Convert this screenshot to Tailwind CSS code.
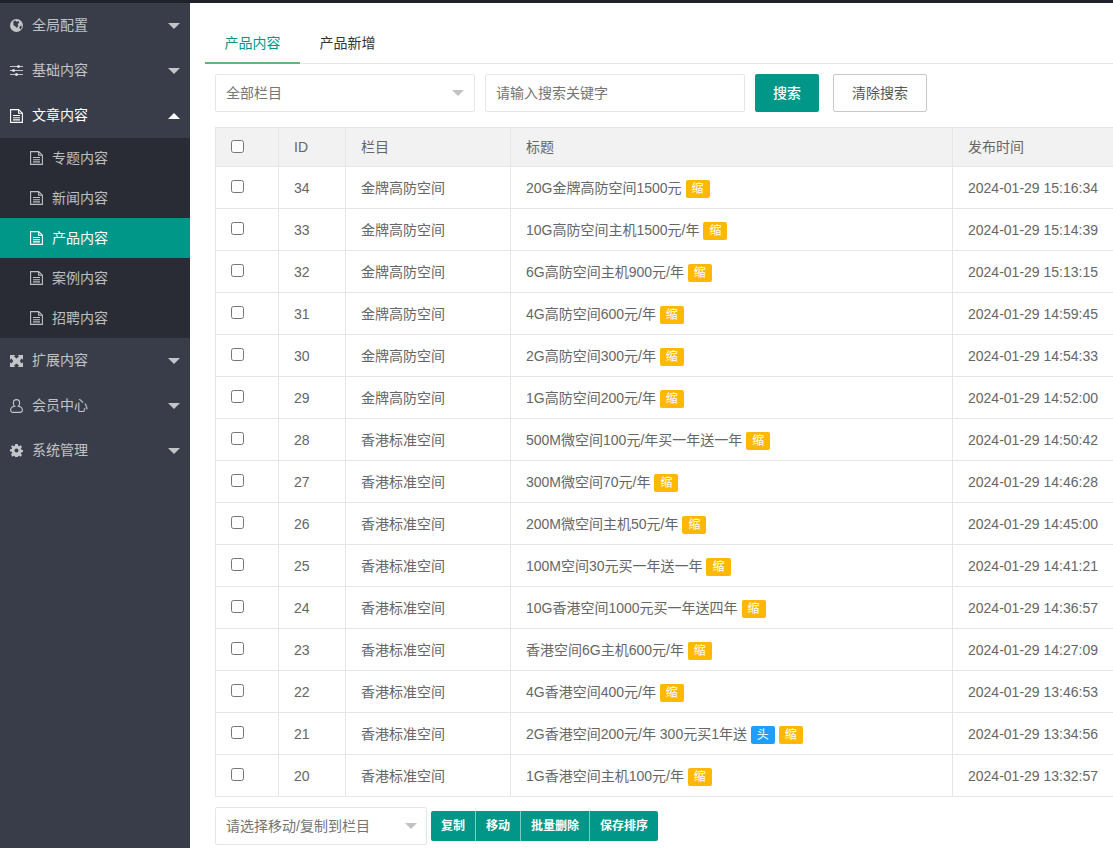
<!DOCTYPE html>
<html lang="zh"><head><meta charset="utf-8"><script src="https://cdn.jsdelivr.net/npm/@tailwindcss/browser@4"></script></head>
<body class="h-[848px] overflow-hidden bg-white font-['Liberation_Sans','Noto_Sans_CJK_SC',sans-serif] text-[14px] text-[#666]">
<svg class="hidden"><defs>
<symbol id="doc" viewBox="0 0 13 14"><path fill="none" stroke="currentColor" stroke-width="1.1" d="M.6.6h8l3.800 3.600v9.200H.6zM8.600.6v3.600h3.800"/><path stroke="currentColor" stroke-width="1.100" d="M3 6.500h7M3 8.700h7M3 10.900h7"/></symbol>
</defs></svg>
<div class="h-[3px] bg-[#20222a]"></div>
<div class="flex h-[845px]">
<aside class="w-[190px] shrink-0 bg-[#393d49] text-[rgba(255,255,255,.7)]">
 <a class="flex h-[45px] items-center pl-[10px] pr-[10px]"><svg class="w-[13px] h-[13px]" viewBox="0 0 13 13"><circle cx="6.500" cy="6.500" r="6.500" fill="currentColor"/><path fill="#393d49" d="M3.200 2.500l2.200-1 1.400 1.200L8.500 2l.7 1.600-1.500 1.600.6 1.600L7 9 5.500 7.500 3.500 6.200zM10 7l1.500-.5.300 1.700-1.300 2.300L9.300 9z"/></svg><span class="ml-[9px] flex-1">全局配置</span><i class="border-x-[6px] border-t-[6px] border-x-transparent border-t-current"></i></a>
 <a class="flex h-[45px] items-center pl-[10px] pr-[10px]"><svg class="w-[13px] h-[13px]" viewBox="0 0 13 13"><path stroke="currentColor" stroke-width="1.100" d="M0 2.500h13M0 6.500h13M0 10.500h13"/><path stroke="currentColor" stroke-width="2.200" d="M8.500 1v3M3.500 5v3M6.500 9v3"/></svg><span class="ml-[9px] flex-1">基础内容</span><i class="border-x-[6px] border-t-[6px] border-x-transparent border-t-current"></i></a>
 <a class="flex h-[45px] items-center pl-[10px] pr-[10px] text-white"><svg class="w-[13px] h-[14px]"><use href="#doc"/></svg><span class="ml-[9px] flex-1">文章内容</span><i class="border-x-[6px] border-b-[6px] border-x-transparent border-b-current"></i></a>
 <div class="bg-[#2a2c35]">
  <a class="flex h-10 items-center pl-[30px]"><svg class="w-[13px] h-[14px]"><use href="#doc"/></svg><span class="ml-[9px]">专题内容</span></a>
  <a class="flex h-10 items-center pl-[30px]"><svg class="w-[13px] h-[14px]"><use href="#doc"/></svg><span class="ml-[9px]">新闻内容</span></a>
  <a class="flex h-10 items-center pl-[30px] bg-[#009688] text-white"><svg class="w-[13px] h-[14px]"><use href="#doc"/></svg><span class="ml-[9px]">产品内容</span></a>
  <a class="flex h-10 items-center pl-[30px]"><svg class="w-[13px] h-[14px]"><use href="#doc"/></svg><span class="ml-[9px]">案例内容</span></a>
  <a class="flex h-10 items-center pl-[30px]"><svg class="w-[13px] h-[14px]"><use href="#doc"/></svg><span class="ml-[9px]">招聘内容</span></a>
 </div>
 <a class="flex h-[45px] items-center pl-[10px] pr-[10px]"><svg class="w-[13px] h-[12px]" viewBox="0 0 13 12"><path fill="currentColor" d="M0 0h5.200L4 1.500 6.500 3.500 9 1.500 7.800 0H13v4.800l-1.500-1.200L9.800 6l1.700 2.400L13 7.200V12H7.800L9 10.500 6.500 8.500 4 10.500 5.200 12H0V7.200l1.500 1.200L3.200 6 1.500 3.600 0 4.800z"/></svg><span class="ml-[9px] flex-1">扩展内容</span><i class="border-x-[6px] border-t-[6px] border-x-transparent border-t-current"></i></a>
 <a class="flex h-[45px] items-center pl-[10px] pr-[10px]"><svg class="w-[13px] h-[14px]" viewBox="0 0 13 14"><path fill="none" stroke="currentColor" stroke-width="1.100" d="M6.500.6c1.900 0 3.100 1.300 3.100 3.100v.9c0 1.200-.5 2.100-1.300 2.700 2.400.5 4.100 1.800 4.100 3.500 0 1.600-1 2.600-2.400 2.600H3c-1.400 0-2.400-1-2.400-2.600 0-1.700 1.700-3 4.100-3.500-.8-.6-1.300-1.500-1.300-2.700v-.9C3.400 1.900 4.600.6 6.500.6z"/></svg><span class="ml-[9px] flex-1">会员中心</span><i class="border-x-[6px] border-t-[6px] border-x-transparent border-t-current"></i></a>
 <a class="flex h-[45px] items-center pl-[10px] pr-[10px]"><svg class="w-[13px] h-[13px]" viewBox="0 0 13 13"><path fill="currentColor" fill-rule="evenodd" d="M5.200 0h2.600l.3 1.800 1.100.5L10.700 1.200l1.300 1.900-1.200 1.400.4 1.100 1.800.3v2.200l-1.800.3-.4 1.100 1.200 1.400-1.300 1.900-1.500-1.100-1.100.5-.3 1.800H5.200l-.3-1.800-1.100-.5-1.500 1.100L1 10.300l1.200-1.400-.4-1.100L0 7.500V5.300l1.800-.3.400-1.100L1 2.500l1.300-1.300 1.500 1.100 1.100-.5zM6.500 4.500a2 2 0 1 0 0 4 2 2 0 0 0 0-4z"/></svg><span class="ml-[9px] flex-1">系统管理</span><i class="border-x-[6px] border-t-[6px] border-x-transparent border-t-current"></i></a>
</aside>
<main class="min-w-0 flex-1 overflow-hidden">
 <div class="mt-[20px] ml-[15px] flex h-[41px] border-b border-[#e6e6e6]">
  <div class="relative flex w-[95px] h-[40px] items-center justify-center text-[#009688] after:absolute after:inset-x-0 after:bottom-[-1px] after:h-[2px] after:bg-[#5fb878] after:content-['']">产品内容</div>
  <div class="flex w-[95px] h-[40px] items-center justify-center text-[#333]">产品新增</div>
 </div>
 <form class="ml-[25px] mt-[10px] flex h-[38px]">
  <div class="flex w-[260px] items-center justify-between rounded-[2px] border border-[#e6e6e6] pl-[10px] pr-[10px] text-[#757575]">全部栏目<i class="border-x-[6px] border-t-[6px] border-x-transparent border-t-[#c2c2c2]"></i></div>
  <div class="ml-[10px] flex w-[260px] items-center rounded-[2px] border border-[#e6e6e6] pl-[10px] text-[#757575]">请输入搜索关键字</div>
  <button type="button" class="ml-[10px] w-[64px] rounded-[2px] bg-[#009688] font-medium text-white">搜索</button>
  <button type="button" class="ml-[14px] w-[94px] rounded-[2px] border border-[#c9c9c9] text-[#555]">清除搜索</button>
 </form>
 <div class="ml-[25px] mt-[15px] w-[1000px]">
 <table class="w-[1000px] table-fixed border-collapse">
  <colgroup><col class="w-[63px]"><col class="w-[67px]"><col class="w-[165px]"><col class="w-[442px]"><col></colgroup>
  <thead><tr class="h-[39px] bg-[#f2f2f2] text-left"><th class="border border-[#e6e6e6] pl-[15px] pb-[3px] font-normal"><input type="checkbox" class="align-middle w-[13px] h-[13px]"></th><th class="border border-[#e6e6e6] pl-[15px] pt-[1px] font-normal">ID</th><th class="border border-[#e6e6e6] pl-[15px] pt-[1px] font-normal">栏目</th><th class="border border-[#e6e6e6] pl-[15px] pt-[1px] font-normal">标题</th><th class="border border-[#e6e6e6] pl-[15px] pt-[1px] font-normal">发布时间</th></tr></thead>
  <tbody>
  <tr class="h-[42px]"><td class="border border-[#e6e6e6] pl-[15px] pb-[3px]"><input type="checkbox" class="align-middle w-[13px] h-[13px]"></td><td class="border border-[#e6e6e6] pl-[15px] pt-[2px]">34</td><td class="border border-[#e6e6e6] pl-[15px] pt-[2px]">金牌高防空间</td><td class="border border-[#e6e6e6] pl-[15px] pt-[2px]">20G金牌高防空间1500元 <span class="inline-block h-[18px] rounded-[2px] bg-[#ffb800] px-[6px] text-[12px] leading-[18px] text-white">缩</span></td><td class="border border-[#e6e6e6] pl-[15px] pt-[2px]">2024-01-29 15:16:34</td></tr>
  <tr class="h-[42px]"><td class="border border-[#e6e6e6] pl-[15px] pb-[3px]"><input type="checkbox" class="align-middle w-[13px] h-[13px]"></td><td class="border border-[#e6e6e6] pl-[15px] pt-[2px]">33</td><td class="border border-[#e6e6e6] pl-[15px] pt-[2px]">金牌高防空间</td><td class="border border-[#e6e6e6] pl-[15px] pt-[2px]">10G高防空间主机1500元/年 <span class="inline-block h-[18px] rounded-[2px] bg-[#ffb800] px-[6px] text-[12px] leading-[18px] text-white">缩</span></td><td class="border border-[#e6e6e6] pl-[15px] pt-[2px]">2024-01-29 15:14:39</td></tr>
  <tr class="h-[42px]"><td class="border border-[#e6e6e6] pl-[15px] pb-[3px]"><input type="checkbox" class="align-middle w-[13px] h-[13px]"></td><td class="border border-[#e6e6e6] pl-[15px] pt-[2px]">32</td><td class="border border-[#e6e6e6] pl-[15px] pt-[2px]">金牌高防空间</td><td class="border border-[#e6e6e6] pl-[15px] pt-[2px]">6G高防空间主机900元/年 <span class="inline-block h-[18px] rounded-[2px] bg-[#ffb800] px-[6px] text-[12px] leading-[18px] text-white">缩</span></td><td class="border border-[#e6e6e6] pl-[15px] pt-[2px]">2024-01-29 15:13:15</td></tr>
  <tr class="h-[42px]"><td class="border border-[#e6e6e6] pl-[15px] pb-[3px]"><input type="checkbox" class="align-middle w-[13px] h-[13px]"></td><td class="border border-[#e6e6e6] pl-[15px] pt-[2px]">31</td><td class="border border-[#e6e6e6] pl-[15px] pt-[2px]">金牌高防空间</td><td class="border border-[#e6e6e6] pl-[15px] pt-[2px]">4G高防空间600元/年 <span class="inline-block h-[18px] rounded-[2px] bg-[#ffb800] px-[6px] text-[12px] leading-[18px] text-white">缩</span></td><td class="border border-[#e6e6e6] pl-[15px] pt-[2px]">2024-01-29 14:59:45</td></tr>
  <tr class="h-[42px]"><td class="border border-[#e6e6e6] pl-[15px] pb-[3px]"><input type="checkbox" class="align-middle w-[13px] h-[13px]"></td><td class="border border-[#e6e6e6] pl-[15px] pt-[2px]">30</td><td class="border border-[#e6e6e6] pl-[15px] pt-[2px]">金牌高防空间</td><td class="border border-[#e6e6e6] pl-[15px] pt-[2px]">2G高防空间300元/年 <span class="inline-block h-[18px] rounded-[2px] bg-[#ffb800] px-[6px] text-[12px] leading-[18px] text-white">缩</span></td><td class="border border-[#e6e6e6] pl-[15px] pt-[2px]">2024-01-29 14:54:33</td></tr>
  <tr class="h-[42px]"><td class="border border-[#e6e6e6] pl-[15px] pb-[3px]"><input type="checkbox" class="align-middle w-[13px] h-[13px]"></td><td class="border border-[#e6e6e6] pl-[15px] pt-[2px]">29</td><td class="border border-[#e6e6e6] pl-[15px] pt-[2px]">金牌高防空间</td><td class="border border-[#e6e6e6] pl-[15px] pt-[2px]">1G高防空间200元/年 <span class="inline-block h-[18px] rounded-[2px] bg-[#ffb800] px-[6px] text-[12px] leading-[18px] text-white">缩</span></td><td class="border border-[#e6e6e6] pl-[15px] pt-[2px]">2024-01-29 14:52:00</td></tr>
  <tr class="h-[42px]"><td class="border border-[#e6e6e6] pl-[15px] pb-[3px]"><input type="checkbox" class="align-middle w-[13px] h-[13px]"></td><td class="border border-[#e6e6e6] pl-[15px] pt-[2px]">28</td><td class="border border-[#e6e6e6] pl-[15px] pt-[2px]">香港标准空间</td><td class="border border-[#e6e6e6] pl-[15px] pt-[2px]">500M微空间100元/年买一年送一年 <span class="inline-block h-[18px] rounded-[2px] bg-[#ffb800] px-[6px] text-[12px] leading-[18px] text-white">缩</span></td><td class="border border-[#e6e6e6] pl-[15px] pt-[2px]">2024-01-29 14:50:42</td></tr>
  <tr class="h-[42px]"><td class="border border-[#e6e6e6] pl-[15px] pb-[3px]"><input type="checkbox" class="align-middle w-[13px] h-[13px]"></td><td class="border border-[#e6e6e6] pl-[15px] pt-[2px]">27</td><td class="border border-[#e6e6e6] pl-[15px] pt-[2px]">香港标准空间</td><td class="border border-[#e6e6e6] pl-[15px] pt-[2px]">300M微空间70元/年 <span class="inline-block h-[18px] rounded-[2px] bg-[#ffb800] px-[6px] text-[12px] leading-[18px] text-white">缩</span></td><td class="border border-[#e6e6e6] pl-[15px] pt-[2px]">2024-01-29 14:46:28</td></tr>
  <tr class="h-[42px]"><td class="border border-[#e6e6e6] pl-[15px] pb-[3px]"><input type="checkbox" class="align-middle w-[13px] h-[13px]"></td><td class="border border-[#e6e6e6] pl-[15px] pt-[2px]">26</td><td class="border border-[#e6e6e6] pl-[15px] pt-[2px]">香港标准空间</td><td class="border border-[#e6e6e6] pl-[15px] pt-[2px]">200M微空间主机50元/年 <span class="inline-block h-[18px] rounded-[2px] bg-[#ffb800] px-[6px] text-[12px] leading-[18px] text-white">缩</span></td><td class="border border-[#e6e6e6] pl-[15px] pt-[2px]">2024-01-29 14:45:00</td></tr>
  <tr class="h-[42px]"><td class="border border-[#e6e6e6] pl-[15px] pb-[3px]"><input type="checkbox" class="align-middle w-[13px] h-[13px]"></td><td class="border border-[#e6e6e6] pl-[15px] pt-[2px]">25</td><td class="border border-[#e6e6e6] pl-[15px] pt-[2px]">香港标准空间</td><td class="border border-[#e6e6e6] pl-[15px] pt-[2px]">100M空间30元买一年送一年 <span class="inline-block h-[18px] rounded-[2px] bg-[#ffb800] px-[6px] text-[12px] leading-[18px] text-white">缩</span></td><td class="border border-[#e6e6e6] pl-[15px] pt-[2px]">2024-01-29 14:41:21</td></tr>
  <tr class="h-[42px]"><td class="border border-[#e6e6e6] pl-[15px] pb-[3px]"><input type="checkbox" class="align-middle w-[13px] h-[13px]"></td><td class="border border-[#e6e6e6] pl-[15px] pt-[2px]">24</td><td class="border border-[#e6e6e6] pl-[15px] pt-[2px]">香港标准空间</td><td class="border border-[#e6e6e6] pl-[15px] pt-[2px]">10G香港空间1000元买一年送四年 <span class="inline-block h-[18px] rounded-[2px] bg-[#ffb800] px-[6px] text-[12px] leading-[18px] text-white">缩</span></td><td class="border border-[#e6e6e6] pl-[15px] pt-[2px]">2024-01-29 14:36:57</td></tr>
  <tr class="h-[42px]"><td class="border border-[#e6e6e6] pl-[15px] pb-[3px]"><input type="checkbox" class="align-middle w-[13px] h-[13px]"></td><td class="border border-[#e6e6e6] pl-[15px] pt-[2px]">23</td><td class="border border-[#e6e6e6] pl-[15px] pt-[2px]">香港标准空间</td><td class="border border-[#e6e6e6] pl-[15px] pt-[2px]">香港空间6G主机600元/年 <span class="inline-block h-[18px] rounded-[2px] bg-[#ffb800] px-[6px] text-[12px] leading-[18px] text-white">缩</span></td><td class="border border-[#e6e6e6] pl-[15px] pt-[2px]">2024-01-29 14:27:09</td></tr>
  <tr class="h-[42px]"><td class="border border-[#e6e6e6] pl-[15px] pb-[3px]"><input type="checkbox" class="align-middle w-[13px] h-[13px]"></td><td class="border border-[#e6e6e6] pl-[15px] pt-[2px]">22</td><td class="border border-[#e6e6e6] pl-[15px] pt-[2px]">香港标准空间</td><td class="border border-[#e6e6e6] pl-[15px] pt-[2px]">4G香港空间400元/年 <span class="inline-block h-[18px] rounded-[2px] bg-[#ffb800] px-[6px] text-[12px] leading-[18px] text-white">缩</span></td><td class="border border-[#e6e6e6] pl-[15px] pt-[2px]">2024-01-29 13:46:53</td></tr>
  <tr class="h-[42px]"><td class="border border-[#e6e6e6] pl-[15px] pb-[3px]"><input type="checkbox" class="align-middle w-[13px] h-[13px]"></td><td class="border border-[#e6e6e6] pl-[15px] pt-[2px]">21</td><td class="border border-[#e6e6e6] pl-[15px] pt-[2px]">香港标准空间</td><td class="border border-[#e6e6e6] pl-[15px] pt-[2px]">2G香港空间200元/年 300元买1年送 <span class="inline-block h-[18px] rounded-[2px] bg-[#1e9fff] px-[6px] text-[12px] leading-[18px] text-white">头</span> <span class="inline-block h-[18px] rounded-[2px] bg-[#ffb800] px-[6px] text-[12px] leading-[18px] text-white">缩</span></td><td class="border border-[#e6e6e6] pl-[15px] pt-[2px]">2024-01-29 13:34:56</td></tr>
  <tr class="h-[42px]"><td class="border border-[#e6e6e6] pl-[15px] pb-[3px]"><input type="checkbox" class="align-middle w-[13px] h-[13px]"></td><td class="border border-[#e6e6e6] pl-[15px] pt-[2px]">20</td><td class="border border-[#e6e6e6] pl-[15px] pt-[2px]">香港标准空间</td><td class="border border-[#e6e6e6] pl-[15px] pt-[2px]">1G香港空间主机100元/年 <span class="inline-block h-[18px] rounded-[2px] bg-[#ffb800] px-[6px] text-[12px] leading-[18px] text-white">缩</span></td><td class="border border-[#e6e6e6] pl-[15px] pt-[2px]">2024-01-29 13:32:57</td></tr>
  </tbody>
 </table>
 </div>
 <div class="ml-[25px] mt-[10px] flex h-[38px] items-center">
  <div class="flex h-[38px] w-[212px] items-center justify-between rounded-[2px] border border-[#e6e6e6] pl-[10px] pr-[9px] text-[#757575]">请选择移动/复制到栏目<i class="border-x-[6px] border-t-[6px] border-x-transparent border-t-[#c2c2c2]"></i></div>
  <div class="ml-[4px] flex h-[30px] overflow-hidden rounded-[2px] bg-[#009688] text-[12px] font-bold text-white">
   <span class="flex w-[45px] items-center justify-center border-r border-white/50">复制</span>
   <span class="flex w-[45px] items-center justify-center border-r border-white/50">移动</span>
   <span class="flex w-[69px] items-center justify-center border-r border-white/50">批量删除</span>
   <span class="flex w-[68px] items-center justify-center">保存排序</span>
  </div>
 </div>
</main>
</div>
</body></html>
